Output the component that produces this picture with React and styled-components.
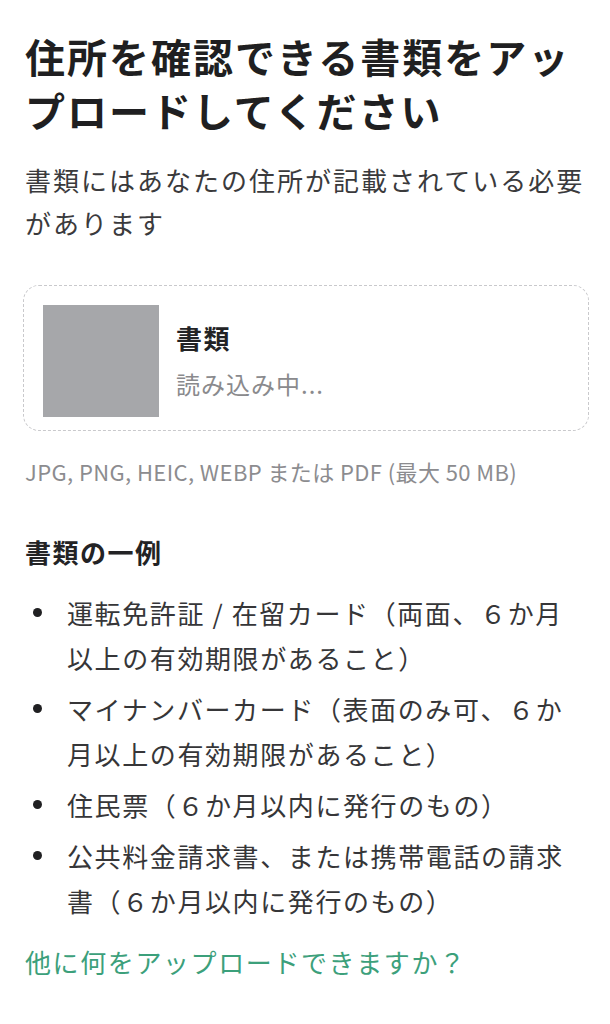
import React from "react";
import styled, {createGlobalStyle} from "styled-components";

const GlobalStyle = createGlobalStyle`
	html, body {
		margin: 0;
		padding: 0;
		background: #ffffff;
	}
	body {
		font-family: "Noto Sans CJK JP", "Noto Sans", sans-serif;
		-webkit-font-smoothing: antialiased;
	}
`;

const Page = styled.main`
	width: 610px;
	box-sizing: border-box;
	padding: 29px 21px 40px 25px;
`;

const Title = styled.h1`
	margin: 0;
	font-size: 40px;
	line-height: 54px;
	font-weight: 700;
	letter-spacing: 2px;
	color: #1f1f21;
`;

const Lead = styled.p`
	margin: 21px 0 0;
	font-size: 26px;
	line-height: 43px;
	letter-spacing: 2px;
	color: #3a3a3c;
`;

const DropZone = styled.div`
	margin: 41px 0 0 -2px;
	display: flex;
	align-items: center;
	gap: 17px;
	padding: 19px 20px 13px 19px;
	border: 1.5px dashed #c9c9cc;
	border-radius: 16px;
`;

const Thumb = styled.div`
	width: 116px;
	height: 112px;
	flex-shrink: 0;
	background: #a6a7aa;
`;

const FileInfo = styled.div`
	display: flex;
	flex-direction: column;
	gap: 10px;
`;

const FileName = styled.span`
	font-size: 26px;
	line-height: 36px;
	font-weight: 700;
	letter-spacing: 1.5px;
	color: #222224;
`;

const FileStatus = styled.span`
	font-size: 24px;
	line-height: 36px;
	letter-spacing: 1px;
	color: #8a8a8d;
`;

const Hint = styled.p`
	margin: 24px 0 0;
	font-size: 22px;
	line-height: 32px;
	letter-spacing: 0.4px;
	color: #8c8c8f;
`;

const SectionTitle = styled.h2`
	margin: 45px 0 0;
	font-size: 26px;
	line-height: 40px;
	font-weight: 700;
	letter-spacing: 1.5px;
	color: #232325;
`;

const ExampleList = styled.ul`
	margin: 18px 0 0;
	padding: 0;
	list-style: none;
`;

const ExampleItem = styled.li`
	position: relative;
	padding-left: 42px;
	font-size: 26px;
	line-height: 45px;
	letter-spacing: 1.6px;
	color: #363638;

	& + & {
		margin-top: 6px;
	}

	&::before {
		content: "";
		position: absolute;
		left: 8px;
		top: 18px;
		width: 9px;
		height: 9px;
		border-radius: 50%;
		background: #202022;
	}
`;

const MoreLink = styled.a`
	display: block;
	margin-top: 19px;
	font-size: 26px;
	line-height: 40px;
	letter-spacing: 1.6px;
	color: #3ca07b;
	text-decoration: none;
	cursor: pointer;
`;

const examples = [
	"運転免許証 / 在留カード（両面、６か月以上の有効期限があること）",
	"マイナンバーカード（表面のみ可、６か月以上の有効期限があること）",
	"住民票（６か月以内に発行のもの）",
	"公共料金請求書、または携帯電話の請求書（６か月以内に発行のもの）",
];

export default function App() {
	return (
		<>
			<GlobalStyle />
			<Page>
				<Title>住所を確認できる書類をアップロードしてください</Title>
				<Lead>書類にはあなたの住所が記載されている必要があります</Lead>

				<DropZone>
					<Thumb />
					<FileInfo>
						<FileName>書類</FileName>
						<FileStatus>読み込み中...</FileStatus>
					</FileInfo>
				</DropZone>

				<Hint>JPG, PNG, HEIC, WEBP または PDF (最大 50 MB)</Hint>

				<SectionTitle>書類の一例</SectionTitle>
				<ExampleList>
					{examples.map((text) => (
						<ExampleItem key={text}>{text}</ExampleItem>
					))}
				</ExampleList>

				<MoreLink>他に何をアップロードできますか？</MoreLink>
			</Page>
		</>
	);
}
